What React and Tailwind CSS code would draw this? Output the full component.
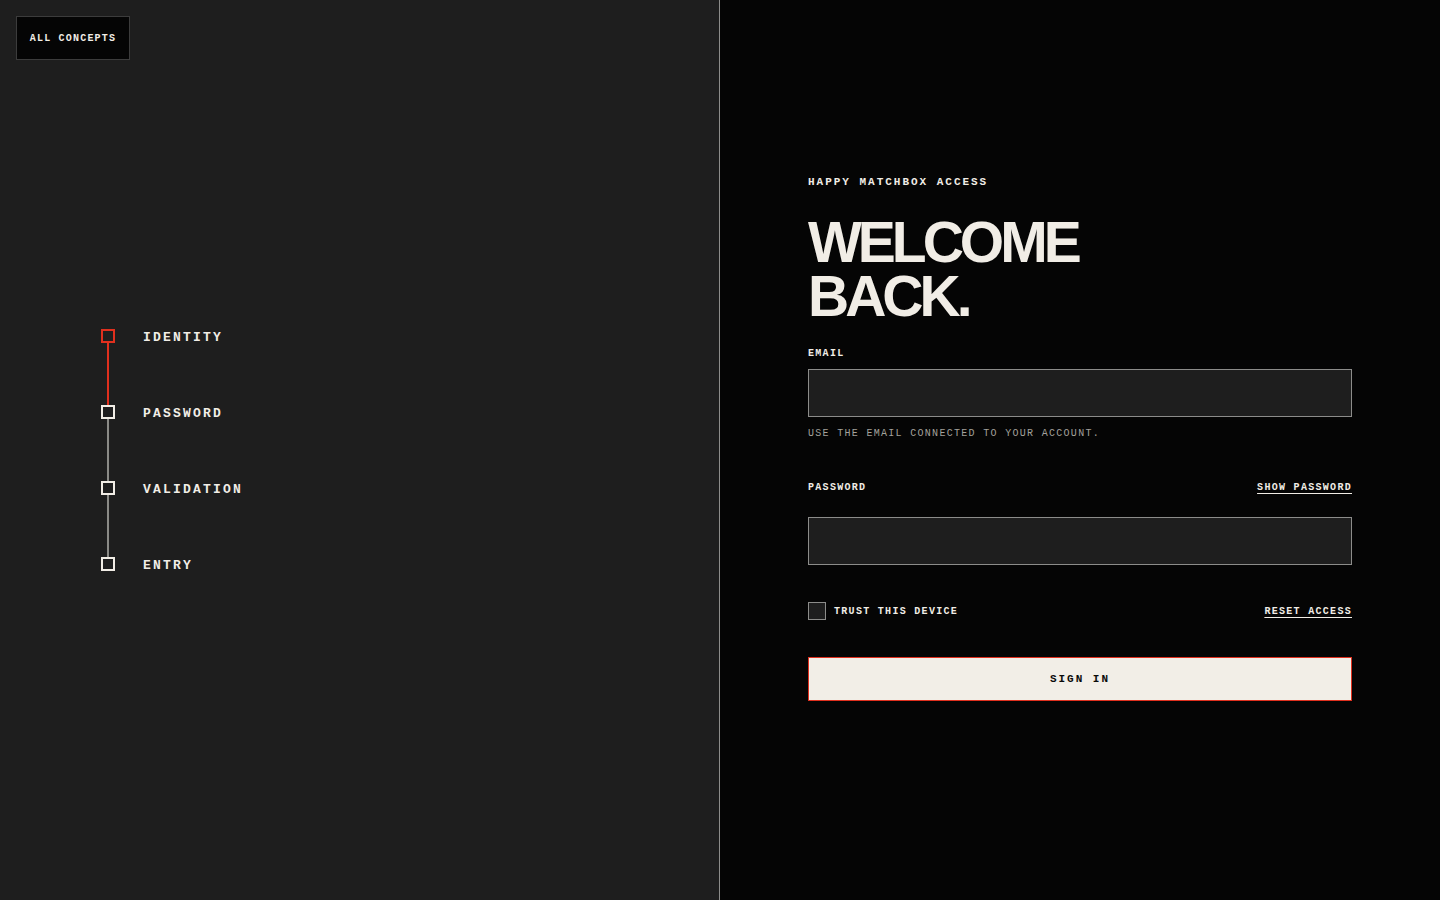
import React, { useState } from "react";

const steps = [
  { label: "IDENTITY", active: true },
  { label: "PASSWORD" },
  { label: "VALIDATION" },
  { label: "ENTRY" },
];

const mono = "font-['Liberation_Mono','Courier_New',monospace]";

function Stepper() {
  return (
    <div className="flex flex-col">
      {steps.map((step, i) => (
        <div key={step.label} className="flex flex-col">
          <div className="flex items-center gap-[28px] h-[14px]">
            <div
              className={`w-[14px] h-[14px] border-2 ${
                step.active ? "border-[#e0301e]" : "border-[#f1ede6]"
              }`}
            />
            <span className={`mt-[4px] ${mono} font-bold text-[13px] leading-[14px] tracking-[0.17em] text-[#f1ede6]`}>
              {step.label}
            </span>
          </div>
          {i < steps.length - 1 && (
            <div
              className={`ml-[6px] w-[2px] h-[62px] ${
                step.active ? "bg-[#e0301e]" : "bg-[#8a8a86]"
              }`}
            />
          )}
        </div>
      ))}
    </div>
  );
}

export default function App() {
  const [showPassword, setShowPassword] = useState(false);
  const [trust, setTrust] = useState(false);

  return (
    <div className={`flex w-full h-[900px] ${mono} text-[#f1ede6]`}>
      {/* left: progress */}
      <div className="relative w-[720px] h-full bg-[#1e1e1e] border-r border-[#8c8c8a] flex items-center pl-[101px]">
        <button
          type="button"
          className="absolute top-[16px] left-[16px] w-[114px] h-[44px] bg-[#050505] border border-[#3c3c3c] font-bold text-[10px] tracking-[0.12em] text-[#f1ede6]"
        >
          ALL CONCEPTS
        </button>
        <Stepper />
      </div>

      {/* right: form */}
      <div className="flex-1 h-full bg-[#050505]">
        <div className="w-[544px] mx-auto pt-[175px]">
          <p className="font-bold text-[11px] leading-[14px] tracking-[0.18em]">HAPPY MATCHBOX ACCESS</p>
          <h1 className="mt-[26px] font-['Liberation_Sans',Arial,sans-serif] font-bold text-[57px] leading-[54px] tracking-[-0.07em] text-[#f1ede6]">
            WELCOME
            <br />
            BACK.
          </h1>

          <label className="block mt-[24px] font-bold text-[10px] leading-[14px] tracking-[0.13em]">EMAIL</label>
          <input
            type="email"
            className="block mt-[8px] w-full h-[48px] bg-[#1e1e1e] border border-[#8c8c8a] px-4 text-[14px] outline-none"
          />
          <p className="mt-[10px] text-[10px] leading-[14px] tracking-[0.13em] text-[#a3a19c]">
            USE THE EMAIL CONNECTED TO YOUR ACCOUNT.
          </p>

          <div className="mt-[40px] flex items-center justify-between">
            <label className="font-bold text-[10px] leading-[14px] tracking-[0.13em]">PASSWORD</label>
            <button
              type="button"
              onClick={() => setShowPassword(!showPassword)}
              className="font-bold text-[10px] leading-[14px] tracking-[0.13em] underline underline-offset-[3px]"
            >
              SHOW PASSWORD
            </button>
          </div>
          <input
            type={showPassword ? "text" : "password"}
            className="block mt-[22px] w-full h-[48px] bg-[#1e1e1e] border border-[#8c8c8a] px-4 text-[14px] outline-none"
          />

          <div className="mt-[37px] flex items-center justify-between">
            <label className="flex items-center gap-[8px] cursor-pointer">
              <span
                onClick={() => setTrust(!trust)}
                className="w-[18px] h-[18px] bg-[#1e1e1e] border border-[#8c8c8a]"
              />
              <span className="mt-[2px] font-bold text-[10px] leading-[14px] tracking-[0.13em]">TRUST THIS DEVICE</span>
            </label>
            <a className="mt-[2px] font-bold text-[10px] leading-[14px] tracking-[0.13em] underline underline-offset-[3px]">
              RESET ACCESS
            </a>
          </div>

          <button
            type="button"
            className="mt-[37px] w-full h-[44px] bg-[#f2eee7] border border-[#e0301e] text-[#0a0a0a] font-bold text-[11px] tracking-[0.18em]"
          >
            SIGN IN
          </button>
        </div>
      </div>
    </div>
  );
}
